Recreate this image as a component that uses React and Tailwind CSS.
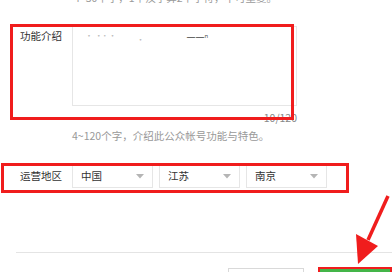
export default function App() {
  const font = "font-['Noto_Sans_CJK_SC','Noto_Sans',sans-serif]";
  const Caret = () => (
    <svg width="8" height="5" viewBox="0 0 8 5" className="shrink-0">
      <path d="M0 0 L8 0 L4 4.5 Z" fill="#b5b5b5" />
    </svg>
  );
  const Select = ({ label }) => (
    <div className="w-[81px] h-[24px] border border-[#e6e6e6] bg-white flex items-center justify-between pl-[8px] pr-[8px] text-[10.5px] text-[#333]">
      <span>{label}</span>
      <Caret />
    </div>
  );
  return (
    <div className={`relative w-[392px] h-[272px] overflow-hidden bg-white ${font}`}>
      {/* top clipped hint */}
      <div className="-mt-[9px] h-[14px] pl-[74px] text-[10.5px] leading-[14px] text-[#9a9a9a] whitespace-nowrap">
        4~30个字，1个汉字算2个字符，不可重复。
      </div>

      {/* 功能介绍 row */}
      <div className="mt-[21px] flex">
        <div className="w-[72px] pl-[20px] pt-[3px] text-[10.5px] leading-[14px] text-[#333]">功能介绍</div>
        <div className="w-[225px] h-[80px] border border-[#e6e6e6] bg-white relative">
          <div className="flex items-start pl-[12px] pt-[4px] text-[8px] leading-[10px] text-[#bbb]">
            <span>· ·˙ ·</span>
            <span className="ml-[20px] mt-[4px]">·</span>
            <span className="ml-[42px] mt-[2px] text-[9px] text-[#444]">一一ⁿ</span>
          </div>
        </div>
      </div>
      <div className="w-[297px] text-right text-[10.5px] leading-[14px] text-[#888] mt-[5px]">10/120</div>
      <div className="pl-[72px] mt-[4px] text-[10.5px] leading-[14px] text-[#999]">4~120个字，介绍此公众帐号功能与特色。</div>

      {/* 运营地区 row */}
      <div className="mt-[21px] flex items-center">
        <div className="w-[72px] pl-[20px] text-[10.5px] leading-[14px] text-[#333]">运营地区</div>
        <div className="flex gap-[6px]">
          <Select label="中国" />
          <Select label="江苏" />
          <Select label="南京" />
        </div>
      </div>

      {/* divider */}
      <div className="ml-[16px] mt-[64px] h-px bg-[#e4e4e4]" />

      {/* buttons */}
      <div className="flex mt-[15px]">
        <div className="ml-[228px] w-[79px] h-[30px] border border-[#d9d9d9] bg-white" />
        <div className="ml-[14px] -mt-[1px] w-[76px] h-[30px] border-2 border-[#f01d1d] bg-[#44b549]" />
      </div>

      {/* annotations */}
      <div className="absolute left-[10px] top-[24px] w-[284px] h-[96px] border-[3px] border-[#f01d1d]" />
      <div className="absolute left-[1px] top-[163px] w-[348px] h-[30px] border-[3px] border-[#f01d1d]" />
      <svg className="absolute left-0 top-0" width="392" height="272" viewBox="0 0 392 272">
        <line x1="388" y1="196" x2="368" y2="240" stroke="#f01d1d" strokeWidth="3.5" />
        <path d="M356 234 L378 246 L358 264 Z" fill="#f01d1d" />
      </svg>
    </div>
  );
}
